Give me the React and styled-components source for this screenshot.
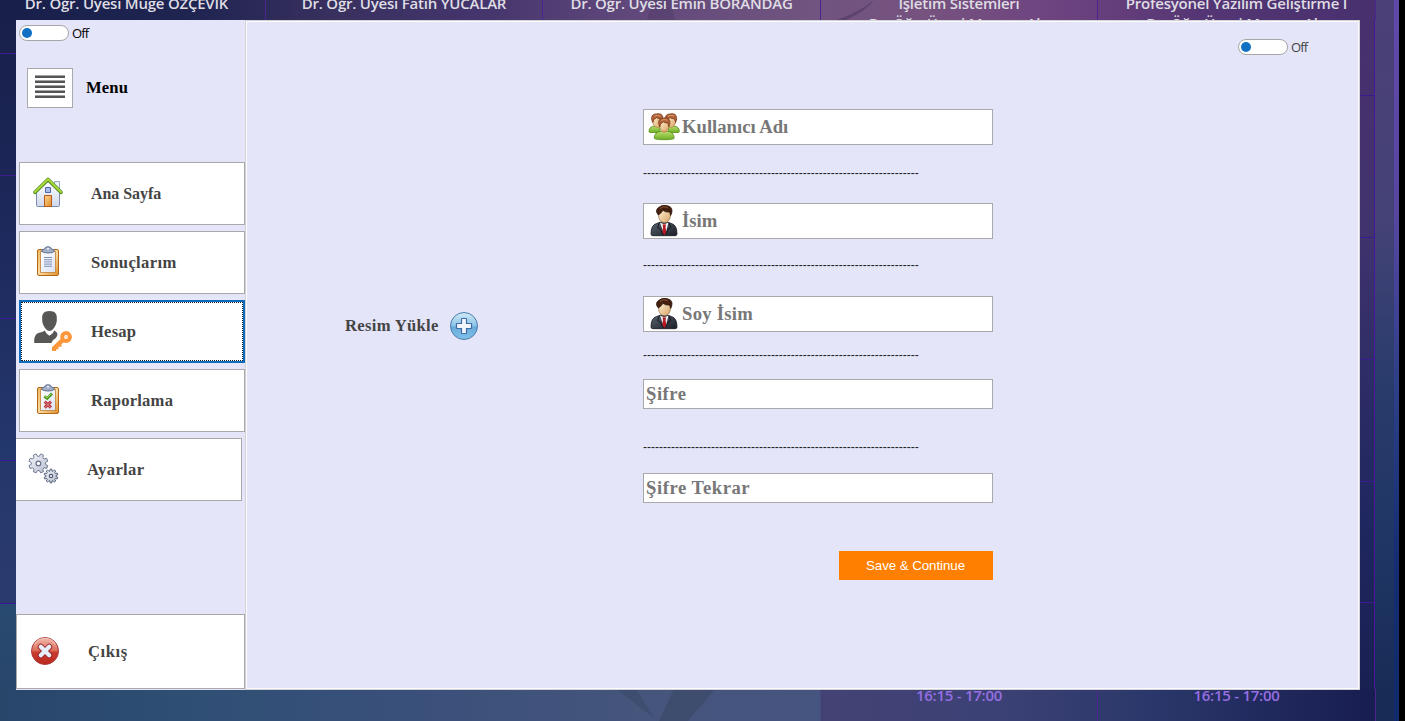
import React from "react";
import styled, { createGlobalStyle, css } from "styled-components";

const Global = createGlobalStyle`
  * { box-sizing: border-box; }
  body { margin: 0; background: #000; overflow: hidden; }
  button { font: inherit; text-align: left; cursor: pointer; }
`;

const lavender = "#e4e5f9";
const serif = '"Liberation Serif", "Times New Roman", serif';
const sans = '"Open Sans", "Noto Sans", sans-serif';

/* ---------- timetable behind the window ---------- */

const Desktop = styled.div`
  position: relative;
  display: flex;
  flex-direction: column;
  width: 1405px;
  height: 721px;
  overflow: hidden;
  background: #000;
`;

const Band = styled.div`
  position: relative;
  display: flex;
  width: 1405px;
  height: ${(p) => p.$height}px;
  overflow: hidden;
  background: ${(p) => p.$background};
`;

const Columns = styled.div`
  position: relative;
  display: grid;
  flex: none;
  grid-template-columns: 278px 277px 278px 277px 278px;
  margin-left: -12px;
`;

const Slot = styled.div`
  display: flex;
  flex-direction: column;
  align-items: center;
  border-right: 1px solid ${(p) => (p.$plain ? "transparent" : "#4b2592")};
`;

const Course = styled.span`
  flex: none;
  height: 20px;
  margin-top: ${(p) => p.$shift}px;
  color: #dfdde3;
  font: 600 15px/20px ${sans};
  letter-spacing: -0.22px;
  white-space: nowrap;
`;

const Hours = styled.span`
  flex: none;
  margin-top: ${(p) => p.$shift}px;
  color: #966ee2;
  font: 600 15px/20px ${sans};
  letter-spacing: -0.25px;
  white-space: nowrap;
`;

const Middle = styled.div`
  display: flex;
  justify-content: space-between;
  height: 669px;
`;

const LeftEdge = styled.div`
  display: grid;
  grid-template-rows: 34px 122px 143px 142px 143px 1fr;
  width: 16px;
  background: linear-gradient(#18204a, #1e2a5e 35%, #243a70 70%, #2a3a6e 87%);
`;

const EdgeCell = styled.div`
  border-bottom: 1px solid #3c1a92;
  background: ${(p) => p.$fill || "none"};
`;

const RightEdge = styled.div`
  display: grid;
  grid-template-columns: 16px 19px 5px 6px;
  width: 46px;
`;

const RightCells = styled.div`
  display: grid;
  grid-template-rows: 76px 142px 122px 122px 121px 1fr;
  border-right: 1px solid #47189a;
  background: linear-gradient(#48306e, #41336e 30%, #2c2c66 55%, #1f2760 75%, #192052);
`;

const Strip = styled.div`
  background: ${(p) => p.$fill};
`;

const EdgeStrips = styled.div`
  display: grid;
  flex: none;
  grid-template-columns: 19px 5px 6px;
  margin-left: -1px;
`;

const Feather = styled.svg`
  position: absolute;
  top: 0;
  left: ${(p) => p.$left}px;
`;

/* ---------- window ---------- */

const Window = styled.section`
  position: absolute;
  top: 20px;
  left: 16px;
  display: flex;
  width: 1344px;
  height: 670px;
  background: ${lavender};
`;

const Sidebar = styled.aside`
  display: flex;
  flex-direction: column;
  width: 229px;
  padding-top: 5px;
  padding-bottom: 1px;
`;

const SwitchRow = styled.label`
  display: flex;
  align-items: center;
  gap: 3px;
  height: 16px;
  margin-left: ${(p) => p.$left}px;
  color: ${(p) => p.$color};
  font: 400 13px/16px ${sans};
  letter-spacing: -0.85px;
`;

const Track = styled.span`
  display: flex;
  align-items: center;
  width: 50px;
  height: 16px;
  padding-left: 2px;
  border: 1px solid #a6a6a6;
  border-radius: 8px;
  background: #fff;
`;

const Thumb = styled.span`
  width: 10px;
  height: 10px;
  border-radius: 50%;
  background: #0f70c4;
`;

const MenuHeader = styled.div`
  display: flex;
  align-items: center;
  gap: 13px;
  margin: 27px 0 54px 11px;
  height: 40px;
`;

const MenuButton = styled.button`
  display: flex;
  width: 46px;
  height: 40px;
  padding: 6px 7px;
  border: 1px solid #a9a9ab;
  background: #fff;
`;

const MenuTitle = styled.h1`
  margin: 0;
  color: #000;
  font: 700 16.6px/20px ${serif};
  letter-spacing: 0.15px;
`;

const NavList = styled.nav`
  display: flex;
  flex-direction: column;
  gap: 6px;
`;

const NavButton = styled.button`
  display: flex;
  align-items: center;
  flex: none;
  gap: ${(p) => p.$gap || 17}px;
  width: ${(p) => p.$width || 226}px;
  height: ${(p) => p.$height || 63}px;
  margin-left: 3px;
  padding: 0 0 0 10px;
  border: 1px solid #a9a9ab;
  background: #fff;
  ${(p) =>
    p.$flush &&
    css`
      margin-left: 0;
      padding-left: ${p.$flush}px;
    `}
  ${(p) => p.$cut && "border-left: 0;"}
  ${(p) =>
    p.$active &&
    css`
      border-color: #0f6cbd;
      box-shadow: inset 0 0 0 1px #0f6cbd;
      outline: 1px dotted #222;
      outline-offset: -3px;
    `}
`;

const NavLabel = styled.span`
  color: #444;
  font: 700 ${(p) => p.$size || 16.6}px/20px ${serif};
  letter-spacing: ${(p) => p.$spacing}px;
`;

const Spacer = styled.div`
  flex: 1;
`;

const Content = styled.main`
  display: flex;
  flex-direction: column;
  width: 1115px;
  border: 1px solid #d2d2d6;
  box-shadow: inset 0 0 0 1px #fbfbfd;
  padding-top: 18px;
`;

const Profile = styled.div`
  display: flex;
  align-items: flex-start;
  padding-top: 54px;
`;

const Upload = styled.div`
  display: flex;
  align-items: center;
  width: 298px;
  margin: 202px 0 0 99px;
`;

const UploadLabel = styled.span`
  width: 104px;
  color: #444;
  font: 700 16.6px/20px ${serif};
  letter-spacing: 0.32px;
  white-space: nowrap;
`;

const Form = styled.form`
  display: flex;
  flex-direction: column;
  width: 350px;
`;

const Field = styled.div`
  display: flex;
  align-items: center;
  gap: 1px;
  height: ${(p) => (p.$icon ? 36 : 30)}px;
  padding-left: ${(p) => (p.$icon ? 3 : 2)}px;
  border: 1px solid #a9a9ab;
  background: #fff;
`;

const Hint = styled.span`
  color: #777;
  font: 700 18.67px/28px ${serif};
  letter-spacing: ${(p) => p.$spacing || 0}px;
  white-space: nowrap;
`;

const Rule = styled.div`
  height: 14px;
  margin: ${(p) => p.$above}px 0 ${(p) => p.$below}px;
  color: #222;
  font: 400 12px/14px "Liberation Sans", Arial, sans-serif;
  white-space: nowrap;
`;

const Save = styled.button`
  align-self: flex-end;
  width: 154px;
  height: 29px;
  margin-top: 48px;
  padding: 0 1px 0 0;
  border: 0;
  background: #ff8000;
  color: #fff;
  font: 400 13.33px/29px "Liberation Sans", Arial, sans-serif;
  letter-spacing: -0.07px;
  text-align: center;
`;

/* ---------- icons ---------- */

const NavIcon = ({ children }) => (
  <svg width="44" height="43" viewBox="0 0 44 43">
    {children}
  </svg>
);

const HomeIcon = () => (
  <NavIcon>
    <defs>
      <linearGradient id="wall" x2="0" y2="1">
        <stop stopColor="#fff" />
        <stop offset="1" stopColor="#cfd8ec" />
      </linearGradient>
      <linearGradient id="door" x2="1" y2="1">
        <stop stopColor="#fbd49a" />
        <stop offset="1" stopColor="#e18c22" />
      </linearGradient>
    </defs>
    <path d="M24.5 9.5h5v10h-5z" fill="#eef1f8" stroke="#9aa6c4" />
    <path d="M6.500 20L18 9.500L29.500 20v13.500q0 1-1 1h-21q-1 0-1-1z" fill="url(#wall)" stroke="#7d8cb5" />
    <path d="M5 20.300L18 7.500l13 12.800" fill="none" stroke="#4d8512" strokeWidth="3.600" strokeLinecap="round" strokeLinejoin="round" />
    <path d="M5 20L18 7.200L31 20" fill="none" stroke="#a9da3e" strokeWidth="1.900" strokeLinecap="round" strokeLinejoin="round" />
    <path d="M15.500 15.500h5v5h-5z" fill="#a9bce8" stroke="#5468a6" />
    <path d="M14.500 23.500h7v11h-7z" fill="url(#door)" stroke="#b5591a" />
  </NavIcon>
);

const Clipboard = ({ children }) => (
  <>
    <defs>
      <linearGradient id="board" x2="1" y2="1">
        <stop stopColor="#f3b95c" />
        <stop offset=".5" stopColor="#fbdda2" />
        <stop offset="1" stopColor="#e08f26" />
      </linearGradient>
      <linearGradient id="sheet" x2="1" y2="1">
        <stop stopColor="#fff" />
        <stop offset="1" stopColor="#d9e3f3" />
      </linearGradient>
    </defs>
    <rect x="7.500" y="8.500" width="21" height="26" rx="1.500" fill="url(#board)" stroke="#b3671a" />
    <path d="M10.500 10.500h15v21h-15z" fill="url(#sheet)" stroke="#c27c35" strokeWidth=".8" />
    <path d="M11.500 10.300q0-2 3-2.300q.5-2.300 3.500-2.300t3.500 2.300q3 .3 3 2.300q-2 1.700-6.500 1.700t-6.500-1.700z" fill="#a3aec8" stroke="#5f6d8e" />
    <circle cx="18" cy="7.800" r="1" fill="#f4f6fb" />
    {children}
  </>
);

const ResultsIcon = () => (
  <NavIcon>
    <Clipboard>
      <path d="M14 16.500h8M14 18.700h8M14 20.900h8M14 23.100h8M14 25.300h8" stroke="#7f8fb8" />
    </Clipboard>
  </NavIcon>
);

const ReportIcon = () => (
  <NavIcon>
    <Clipboard>
      <path d="M14.300 17.300l2.900 2.200l4.800-5" fill="none" stroke="#4d9420" strokeWidth="2.800" />
      <path d="M14.800 17.100l2.400 1.800l4.100-4.300" fill="none" stroke="#a3da60" strokeWidth="1" />
      <path d="M14.700 22.700l6.300 6M21 22.700l-6.300 6" stroke="#b8353d" strokeWidth="3" />
      <path d="M15 23l5.700 5.400M20.700 23L15 28.400" stroke="#e79090" strokeWidth=".9" />
    </Clipboard>
  </NavIcon>
);

const AccountIcon = () => (
  <NavIcon>
    <path d="M19.500 1c5.300 0 7.700 2.700 7.300 7.500c.4 4-1.300 8-3.600 10.500q-3.700 3.800-7.400 0c-2.300-2.500-4-6.500-3.600-10.500C11.800 3.700 14.200 1 19.500 1z" fill="#575756" />
    <path d="M15 20.500q.5 3 4.500 5.300q4-2.300 4.700-5.300q2.800 1.200 3.300 3.500q-.5 4-4.500 6l-1.500 3H4.200v-3.500q.5-5 4-6.500q4.500-1 6.800-2.500z" fill="#575756" />
    <path d="M36 21a6 6 0 1 1-2.300 11.600L31.500 34v2.700h-3v2.500h-2.300V41H22v-3.700l8.500-8.300A6 6 0 0 1 36 21z" fill="#ff9639" />
    <circle cx="36" cy="27" r="1.900" fill="#fff" />
    <circle cx="36" cy="27" r=".8" fill="#ffb780" />
  </NavIcon>
);

const gearPath = (cx, cy, outer, inner, teeth) => {
  const step = (Math.PI * 2) / teeth;
  const points = [];
  for (let i = 0; i < teeth; i += 1) {
    const a = i * step + step / 2;
    [
      [-0.34, inner],
      [-0.2, outer],
      [0.2, outer],
      [0.34, inner],
    ].forEach(([offset, r]) => {
      const t = a + offset * step;
      points.push(`${(cx + Math.cos(t) * r).toFixed(2)} ${(cy + Math.sin(t) * r).toFixed(2)}`);
    });
  }
  return `M${points.join("L")}Z`;
};

const SettingsIcon = () => (
  <NavIcon>
    <defs>
      <linearGradient id="steel" x2="1" y2="1">
        <stop stopColor="#f7f8fb" />
        <stop offset="1" stopColor="#b3bbcd" />
      </linearGradient>
    </defs>
    <path d={gearPath(11.4, 15.4, 9.7, 7.2, 8)} fill="url(#steel)" stroke="#717b94" strokeLinejoin="round" />
    <circle cx="11.400" cy="15.400" r="2.300" fill="#fff" stroke="#66718e" strokeWidth="1.200" />
    <path d={gearPath(24, 28, 6.9, 5, 10)} fill="url(#steel)" stroke="#56617c" strokeLinejoin="round" />
    <circle cx="24" cy="28" r="1.700" fill="#fff" stroke="#4f5a76" strokeWidth="1.200" />
  </NavIcon>
);

const ExitIcon = () => (
  <NavIcon>
    <defs>
      <linearGradient id="red" x2="0" y2="1">
        <stop stopColor="#f3bcae" />
        <stop offset=".48" stopColor="#dc6d5b" />
        <stop offset=".54" stopColor="#cc3d30" />
        <stop offset="1" stopColor="#b8271d" />
      </linearGradient>
    </defs>
    <circle cx="15" cy="21" r="13.500" fill="url(#red)" stroke="#a83a3a" />
    <path d="M4.500 14.500Q7.500 8.500 15 8.300q7.500.2 10.500 6.200" fill="none" stroke="#f7d2ca" strokeWidth=".8" />
    <path d="M10.800 16.800l8.400 8.400M19.200 16.800l-8.400 8.400" stroke="#97262c" strokeWidth="6" strokeLinecap="round" />
    <path d="M10.800 16.800l8.400 8.400M19.200 16.800l-8.400 8.400" stroke="#e9eff8" strokeWidth="4.200" strokeLinecap="round" />
  </NavIcon>
);

const BarsIcon = () => (
  <svg width="30" height="24" viewBox="0 0 30 24">
    {[0, 5, 10, 15, 20].map((y) => (
      <g key={y}>
        <path d={`M0 ${y}h30v1H0z`} fill="#a3a3a3" />
        <path d={`M0 ${y + 1}h30v2H0z`} fill="#555" />
      </g>
    ))}
  </svg>
);

const AddIcon = () => (
  <svg width="30" height="30" viewBox="0 0 30 30">
    <defs>
      <linearGradient id="sky" x2="0" y2="1">
        <stop stopColor="#cfeaf7" />
        <stop offset=".48" stopColor="#8ec5e8" />
        <stop offset=".54" stopColor="#68a9da" />
        <stop offset="1" stopColor="#83c4ea" />
      </linearGradient>
    </defs>
    <circle cx="15" cy="15" r="13.500" fill="url(#sky)" stroke="#4c7cae" />
    <path d="M12.500 8q0-.5.500-.5h4q.5 0 .5.500v4.500H22q.5 0 .5.500v4q0 .5-.5.500h-4.500V22q0 .5-.5.500h-4q-.5 0-.5-.5v-4.500H8q-.5 0-.5-.5v-4q0-.5.500-.5h4.500z" fill="#f3f6fd" stroke="#3f6ca3" strokeWidth="1.200" />
  </svg>
);

const Bust = ({ x, y }) => (
  <g transform={`translate(${x} ${y})`}>
    <ellipse cx="0" cy="1.300" rx="4.600" ry="6" fill="url(#face)" stroke="#a86c35" strokeWidth=".6" />
    <path d="M-4.400 2.500C-7.500-3-4.500-6.300-1-6C4-7.500 7.500-4 4.600 2.500L3.700-1Q0-1.500-1-2.500Q-2.500-.5-3.700-.5z" fill="#b0633a" stroke="#7c3a1b" strokeWidth=".8" />
    <path d="M-3-3.800Q0-5.500 3-4" fill="none" stroke="#dc9b6b" strokeWidth="1" />
  </g>
);

const UsersIcon = () => (
  <svg width="34" height="34" viewBox="0 0 34 34">
    <defs>
      <linearGradient id="face" x2="1" y2="1">
        <stop stopColor="#fff0d0" />
        <stop offset="1" stopColor="#dda566" />
      </linearGradient>
      <linearGradient id="shirt" x2="0" y2="1">
        <stop stopColor="#b8e070" />
        <stop offset="1" stopColor="#6fae23" />
      </linearGradient>
    </defs>
    <path d="M2 21.300q0-5 6-5.300h5v6.500H3q-1 0-1-1.200zM32.300 21.300q0-5-6-5.300h-5v6.500h10q1 0 1-1.200z" fill="url(#shirt)" stroke="#56891b" strokeWidth=".8" />
    <Bust x={10.3} y={10} />
    <Bust x={24} y={10} />
    <path d="M7.200 28.300q0-6.500 7-7h6q7 .5 7 7q-1 1.400-10 1.400t-10-1.400z" fill="url(#shirt)" stroke="#56891b" strokeWidth=".8" />
    <path d="M14.500 18h5.500v3.500q-2.700 3-5.500 0z" fill="#dba465" />
    <Bust x={17.3} y={14.2} />
  </svg>
);

const ManIcon = () => (
  <svg width="34" height="34" viewBox="0 0 34 34">
    <defs>
      <linearGradient id="skin" x2="1" y2="1">
        <stop stopColor="#fff1d3" />
        <stop offset="1" stopColor="#d8a468" />
      </linearGradient>
      <linearGradient id="suit" x2="1" y2="1">
        <stop stopColor="#5b6470" />
        <stop offset="1" stopColor="#1a1e26" />
      </linearGradient>
    </defs>
    <path d="M4 30q0-9 5.500-10.500L14 18h6l4.500 1.500Q30 21 30 30q0 1.700-2 1.700H6q-2 0-2-1.700z" fill="url(#suit)" stroke="#14171d" strokeWidth=".8" />
    <path d="M13 18.500l4 2l4.500-2L18.500 30h-1.500z" fill="#f3f5f8" />
    <path d="M15.500 20.500h3.600l-.6 2.500l.9 5.500l-2.100 3l-2.100-3l.9-5.500z" fill="#ba1822" />
    <path d="M12.500 18.500l-2 5l2.200 1L16.500 31M21.800 18.500l2 5l-2.200 1L18 31" fill="none" stroke="#0f1218" strokeWidth=".9" />
    <ellipse cx="17.500" cy="11.800" rx="5.900" ry="7" fill="url(#skin)" stroke="#885932" strokeWidth=".6" />
    <path d="M11.300 11Q7.500 6.500 11.500 3.500q3.500-3 8-2q5.500 1 5.500 5q.2 2-1.300 5q-.2-2-1.200-3.500q-4.500.5-6.500-1.700q-1.500 2.700-4.700 4.700z" fill="#45200f" stroke="#1d0c05" strokeWidth=".7" />
    <path d="M13 4.500q3.500-3 7.500-1" fill="none" stroke="#8a5538" strokeWidth="1" />
  </svg>
);

/* ---------- page ---------- */

const Switch = ({ left, color }) => (
  <SwitchRow $left={left} $color={color}>
    <Track>
      <Thumb />
    </Track>
    Off
  </SwitchRow>
);

const navItems = [
  { label: "Ana Sayfa", icon: <HomeIcon />, spacing: -0.05, size: 16 },
  { label: "Sonuçlarım", icon: <ResultsIcon />, spacing: 0.35 },
  { label: "Hesap", icon: <AccountIcon />, spacing: 0.2, active: true },
  { label: "Raporlama", icon: <ReportIcon />, spacing: 0.22 },
];

const topSlots = [
  { course: "Dr. Öğr. Üyesi Müge ÖZÇEVİK", hours: "10:50 - 11:35" },
  { course: "Dr. Öğr. Üyesi Fatih YÜCALAR", hours: "14:25 - 15:10" },
  { course: "Dr. Öğr. Üyesi Emin BORANDAĞ", hours: "10:50 - 11:35" },
  { course: "İşletim Sistemleri", teacher: "Dr. Öğr. Üyesi Mansur Alp" },
  { course: "Profesyonel Yazılım Geliştirme I", teacher: "Dr. Öğr. Üyesi Mansur Alp" },
];

const dashes = "-".repeat(69);

const topBackground =
  "linear-gradient(90deg,#181f4b 0,#1f2450 190px,#38305f 330px,#44356c 480px,#62497c 640px,#70547f 800px,#76527f 930px,#6e4480 1050px,#553674 1200px,#48306e 1370px)";
const bottomBackground =
  "linear-gradient(90deg,#28466a 0,#304f75 200px,#3a507a 420px,#45557c 640px,#465480 820px,#444274 821px,#3b4175 1000px,#2b376a 1150px,#1b2256 1330px,#181d50 1374px)";

export default function App() {
  return (
    <>
      <Global />
      <Desktop>
        <Band $height={20} $background={topBackground}>
          <Feather $left={640} width="240" height="20">
            <path d="M12 0L7 20h28L31 0z" fill="#45365e" opacity=".3" />
            <path d="M234 0q-14 12-38 20h10Q226 11 234 0z" fill="#3d2e55" opacity=".4" />
          </Feather>
          <Columns>
            {topSlots.map((slot) => (
              <Slot key={slot.course}>
                <Course $shift={-7}>{slot.course}</Course>
                {slot.hours && <Hours $shift={1}>{slot.hours}</Hours>}
                {slot.teacher && <Course $shift={0}>{slot.teacher}</Course>}
              </Slot>
            ))}
          </Columns>
          <EdgeStrips>
            <Strip $fill="#4b4078" />
            <Strip $fill="#6048a8" />
            <Strip $fill="#000" />
          </EdgeStrips>
        </Band>

        <Middle>
          <LeftEdge>
            <EdgeCell />
            <EdgeCell />
            <EdgeCell />
            <EdgeCell />
            <EdgeCell $fill="linear-gradient(#24386c,#2b3a6e)" />
            <Strip $fill="linear-gradient(#294a70,#28466a)" />
          </LeftEdge>
          <RightEdge>
            <RightCells>
              <EdgeCell />
              <EdgeCell />
              <EdgeCell />
              <EdgeCell />
              <EdgeCell />
              <Strip />
            </RightCells>
            <Strip $fill="linear-gradient(#4b4078,#444276 30%,#283c6c 55%,#1f3563 80%,#182c57)" />
            <Strip $fill="linear-gradient(#6048a8,#5546a0 30%,#2d3f88 55%,#152e74 80%,#112b6a)" />
            <Strip $fill="#000" />
          </RightEdge>
        </Middle>

        <Band $height={32} $background={bottomBackground}>
          <Feather $left={600} width="140" height="32">
            <path d="M16 0L36 0L54 29z" fill="#34435f" opacity=".4" />
            <path d="M74 0h41L88 32H59z" fill="#37435f" opacity=".5" />
          </Feather>
          <Columns>
            <Slot $plain />
            <Slot $plain />
            <Slot $plain />
            <Slot>
              <Hours $shift={-4}>16:15 - 17:00</Hours>
            </Slot>
            <Slot>
              <Hours $shift={-4}>16:15 - 17:00</Hours>
            </Slot>
          </Columns>
          <EdgeStrips>
            <Strip $fill="#182a56" />
            <Strip $fill="#112b6a" />
            <Strip $fill="#000" />
          </EdgeStrips>
        </Band>

        <Window>
          <Sidebar>
            <Switch left={3} color="#000" />
            <MenuHeader>
              <MenuButton type="button" aria-label="Menu">
                <BarsIcon />
              </MenuButton>
              <MenuTitle>Menu</MenuTitle>
            </MenuHeader>
            <NavList>
              {navItems.map((item) => (
                <NavButton key={item.label} type="button" $active={item.active}>
                  {item.icon}
                  <NavLabel $spacing={item.spacing} $size={item.size}>
                    {item.label}
                  </NavLabel>
                </NavButton>
              ))}
              <NavButton type="button" $flush={11} $cut $gap={16}>
                <SettingsIcon />
                <NavLabel $spacing={0.35}>Ayarlar</NavLabel>
              </NavButton>
            </NavList>
            <Spacer />
            <NavButton type="button" $flush={13} $gap={14} $width={229} $height={75}>
              <ExitIcon />
              <NavLabel $spacing={0.55}>Çıkış</NavLabel>
            </NavButton>
          </Sidebar>

          <Content>
            <Switch left={992} color="#444" />
            <Profile>
              <Upload>
                <UploadLabel>Resim Yükle</UploadLabel>
                <AddIcon />
              </Upload>
              <Form>
                <Field $icon>
                  <UsersIcon />
                  <Hint>Kullanıcı Adı</Hint>
                </Field>
                <Rule $above={21} $below={23}>{dashes}</Rule>
                <Field $icon>
                  <ManIcon />
                  <Hint>İsim</Hint>
                </Field>
                <Rule $above={19} $below={24}>{dashes}</Rule>
                <Field $icon>
                  <ManIcon />
                  <Hint $spacing={0.25}>Soy İsim</Hint>
                </Field>
                <Rule $above={16} $below={17}>{dashes}</Rule>
                <Field>
                  <Hint $spacing={0.5}>Şifre</Hint>
                </Field>
                <Rule $above={31} $below={19}>{dashes}</Rule>
                <Field>
                  <Hint $spacing={0.55}>Şifre Tekrar</Hint>
                </Field>
                <Save type="button">Save &amp; Continue</Save>
              </Form>
            </Profile>
          </Content>
        </Window>
      </Desktop>
    </>
  );
}
